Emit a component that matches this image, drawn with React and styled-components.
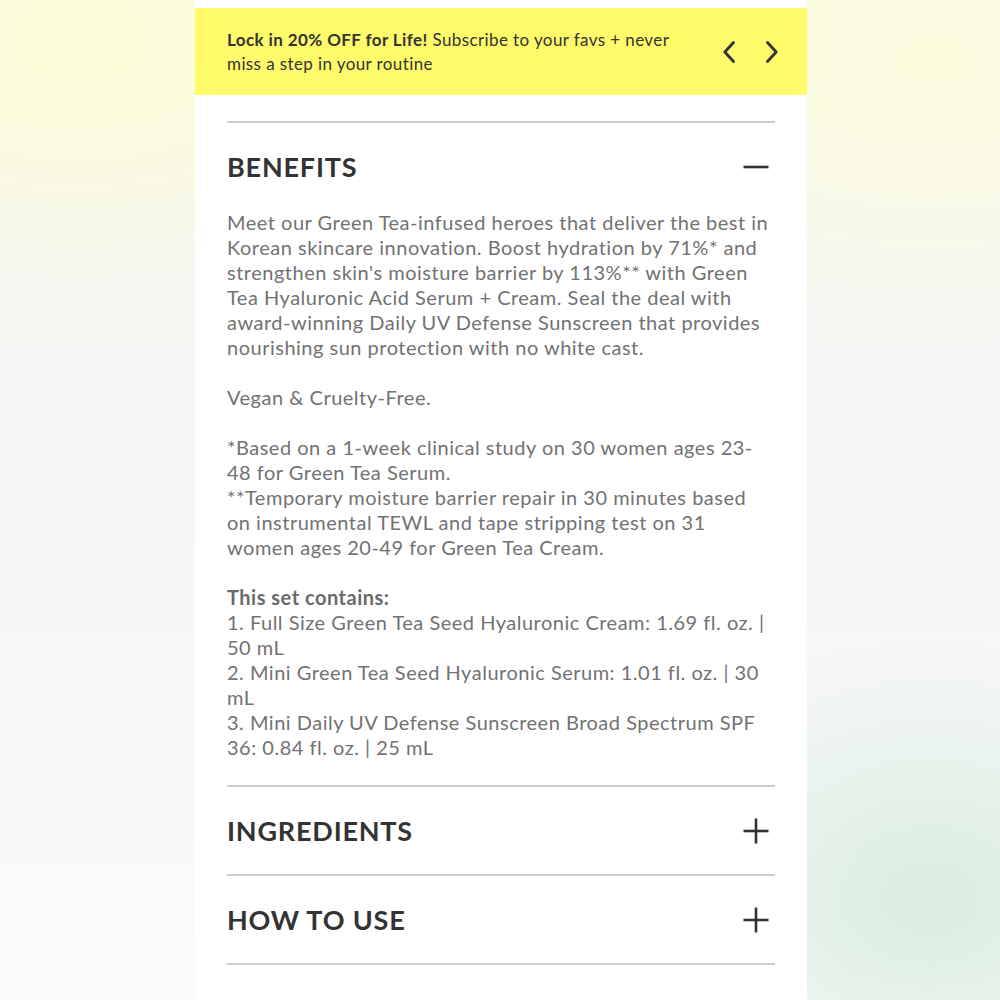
import React from 'react'
import styled, { createGlobalStyle } from 'styled-components'

const ink = '#333333'
const body = '#727272'
const rule = '#cdcdcd'

const Global = createGlobalStyle`
  html, body {
    margin: 0;
    padding: 0;
  }
  body {
    min-height: 1000px;
    font-family: Lato, "Noto Sans", sans-serif;
    background:
      radial-gradient(ellipse 340px 260px at 930px 900px, rgba(214, 236, 222, 0.95), rgba(214, 236, 222, 0) 100%),
      radial-gradient(ellipse 420px 260px at 80px 40px, rgba(252, 252, 214, 1), rgba(252, 252, 214, 0) 100%),
      radial-gradient(ellipse 420px 260px at 930px 60px, rgba(252, 252, 222, 1), rgba(252, 252, 222, 0) 100%),
      linear-gradient(180deg, #f8f8ea 0%, #f5f5f3 35%, #f7f7f7 70%, #fbfbfb 100%);
  }
`

const Panel = styled.main`
  width: 612px;
  min-height: 1000px;
  margin: 0 auto 0 195px;
  padding-top: 8px;
  background: #fff;
  box-sizing: border-box;
`

const Banner = styled.div`
  height: 87px;
  background: #fffb6a;
  display: flex;
  align-items: center;
  justify-content: space-between;
  padding: 0 29px 0 32px;
  box-sizing: border-box;
`

const BannerText = styled.p`
  margin: 0;
  width: 470px;
  font-size: 17px;
  line-height: 24px;
  letter-spacing: 0.4px;
  color: ${ink};
  b {
    font-weight: 700;
  }
`

const Arrows = styled.div`
  display: flex;
  gap: 31px;
  align-items: center;
`

const ArrowBtn = styled.button`
  border: 0;
  padding: 0;
  background: none;
  width: 12px;
  height: 22px;
  display: flex;
  color: ${ink};
`

const Accordion = styled.section`
  margin: 26px 32px 0;
`

const Item = styled.div`
  border-top: 2px solid ${rule};
  &:last-child {
    border-bottom: 2px solid ${rule};
  }
`

const Head = styled.div`
  height: 87px;
  display: flex;
  align-items: center;
  justify-content: space-between;
`

const Title = styled.h2`
  margin: 0;
  font-size: 27px;
  font-weight: 700;
  letter-spacing: 0.8px;
  color: ${ink};
`

const Toggle = styled.svg`
  width: 26px;
  height: 26px;
  margin-right: 6px;
  color: ${ink};
`

const Body = styled.div`
  padding: 0 0 25px;
  font-size: 20px;
  line-height: 25px;
  letter-spacing: 0.5px;
  color: ${body};
`

const Para = styled.p`
  margin: 0 0 25px;
  &:last-child {
    margin-bottom: 0;
  }
  b {
    font-weight: 700;
    color: #6a6a6a;
  }
`

const Line = styled.span`
  display: block;
  white-space: nowrap;
`

const Lines = ({ items }) => items.map((t, i) => <Line key={i}>{t}</Line>)

const Chevron = ({ dir }) => (
  <svg viewBox="0 0 12 22" width="12" height="22" fill="none" stroke="currentColor" strokeWidth="2.8" strokeLinecap="round" strokeLinejoin="round">
    {dir === 'left' ? <path d="M10.5 1.5 L1.8 11 L10.5 20.5" /> : <path d="M1.5 1.5 L10.2 11 L1.5 20.5" />}
  </svg>
)

const PlusMinus = ({ open }) => (
  <Toggle viewBox="0 0 26 26" fill="none" stroke="currentColor" strokeWidth="2.6">
    <path d="M0.5 13 H25.5" />
    {!open && <path d="M13 0.5 V25.5" />}
  </Toggle>
)

const intro = [
  'Meet our Green Tea-infused heroes that deliver the best in',
  'Korean skincare innovation. Boost hydration by 71%* and',
  "strengthen skin's moisture barrier by 113%** with Green",
  'Tea Hyaluronic Acid Serum + Cream. Seal the deal with',
  'award-winning Daily UV Defense Sunscreen that provides',
  'nourishing sun protection with no white cast.',
]

const notes = [
  '*Based on a 1-week clinical study on 30 women ages 23-',
  '48 for Green Tea Serum.',
  '**Temporary moisture barrier repair in 30 minutes based',
  'on instrumental TEWL and tape stripping test on 31',
  'women ages 20-49 for Green Tea Cream.',
]

const contents = [
  '1. Full Size Green Tea Seed Hyaluronic Cream: 1.69 fl. oz. |',
  '50 mL',
  '2. Mini Green Tea Seed Hyaluronic Serum: 1.01 fl. oz. | 30',
  'mL',
  '3. Mini Daily UV Defense Sunscreen Broad Spectrum SPF',
  '36: 0.84 fl. oz. | 25 mL',
]

export default function App() {
  return (
    <>
      <Global />
      <Panel>
        <Banner>
          <BannerText>
            <b>Lock in 20% OFF for Life!</b> Subscribe to your favs + never
            <br />
            miss a step in your routine
          </BannerText>
          <Arrows>
            <ArrowBtn aria-label="Previous"><Chevron dir="left" /></ArrowBtn>
            <ArrowBtn aria-label="Next"><Chevron dir="right" /></ArrowBtn>
          </Arrows>
        </Banner>

        <Accordion>
          <Item>
            <Head>
              <Title>BENEFITS</Title>
              <PlusMinus open />
            </Head>
            <Body>
              <Para><Lines items={intro} /></Para>
              <Para>Vegan &amp; Cruelty-Free.</Para>
              <Para><Lines items={notes} /></Para>
              <Para>
                <Line><b>This set contains:</b></Line>
                <Lines items={contents} />
              </Para>
            </Body>
          </Item>
          <Item>
            <Head>
              <Title>INGREDIENTS</Title>
              <PlusMinus />
            </Head>
          </Item>
          <Item>
            <Head>
              <Title>HOW TO USE</Title>
              <PlusMinus />
            </Head>
          </Item>
        </Accordion>
      </Panel>
    </>
  )
}
